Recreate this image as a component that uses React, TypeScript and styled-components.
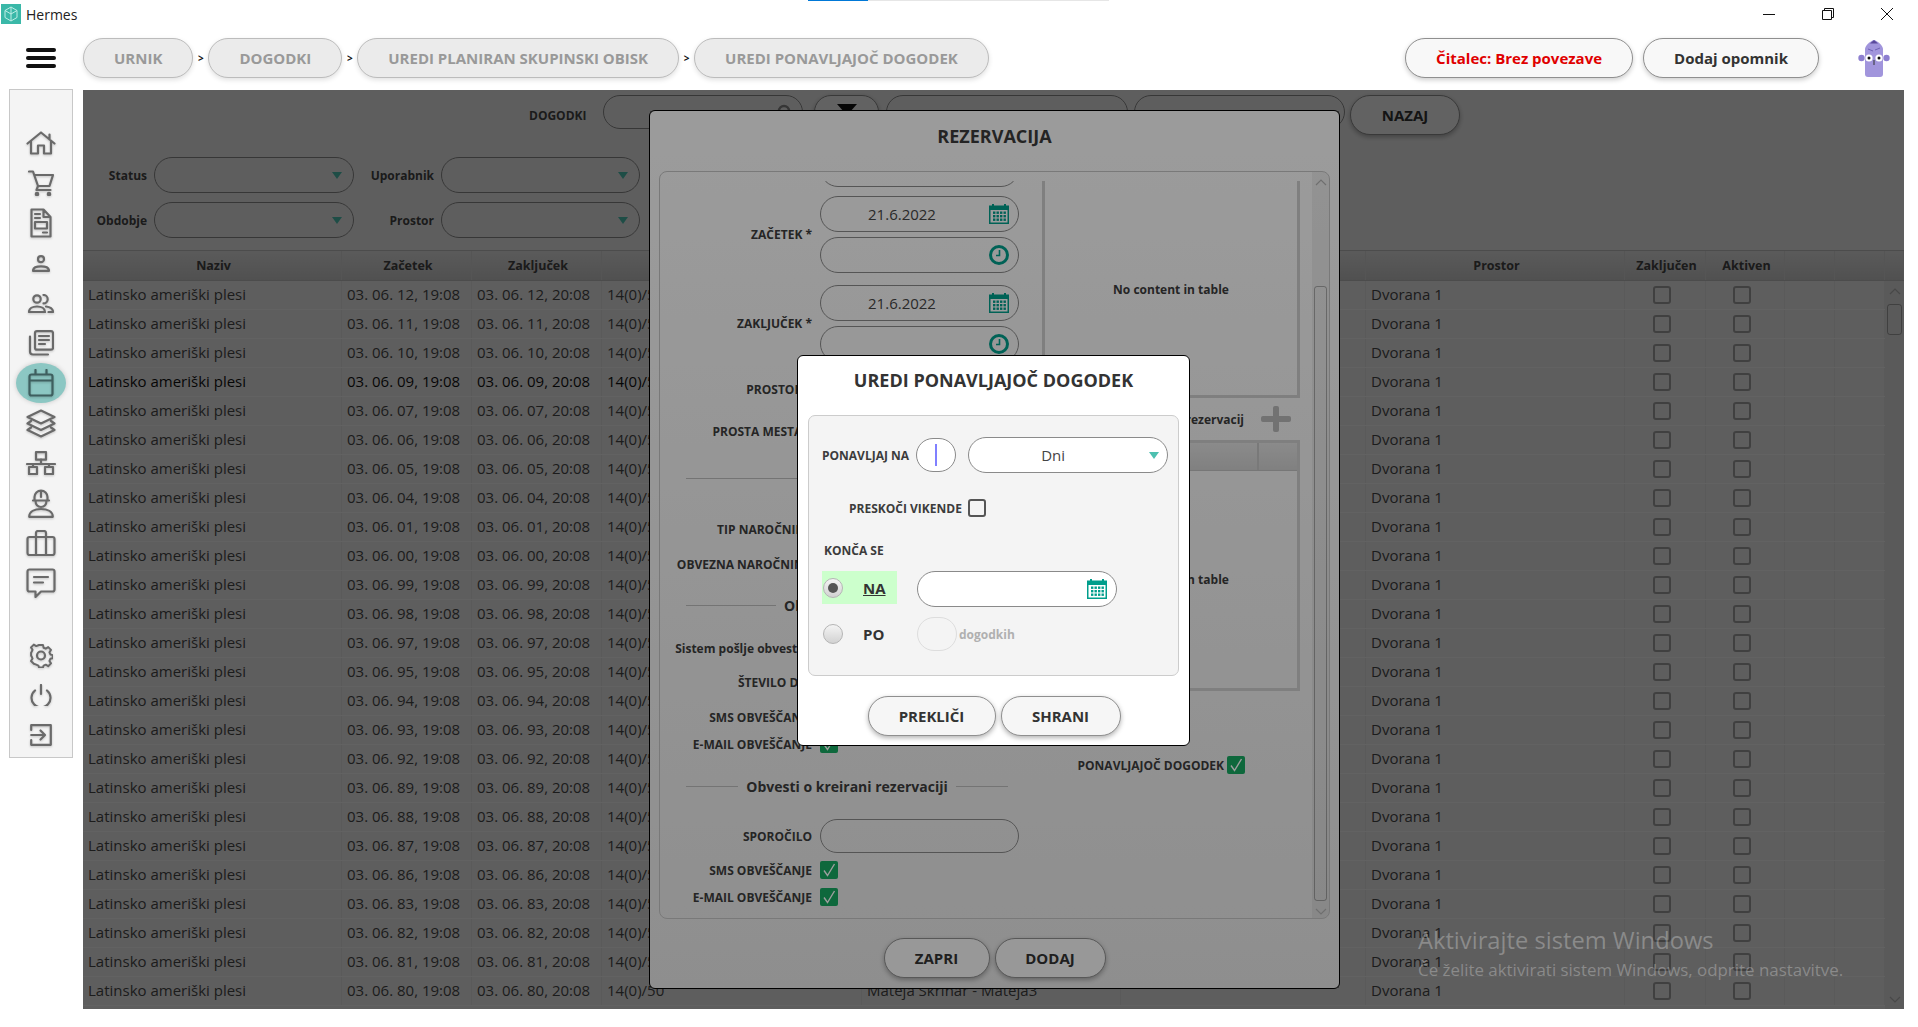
import React from 'react'
import styled, { createGlobalStyle } from 'styled-components'

const GlobalStyle = createGlobalStyle`
  html, body {
    margin: 0;
    padding: 0;
    background: #ffffff;
    overflow: hidden;
  }
  * {
    box-sizing: border-box;
  }
`

const AppWindow = styled.div`
  position: relative;
  width: 1918px;
  height: 1027px;
  overflow: hidden;
  background: #ffffff;
  font-family: 'Open Sans', 'Noto Sans', sans-serif;
  color: #444;
`

const LoadBar = styled.div`
  position: absolute;
  left: 808px;
  top: 0;
  width: 301px;
  height: 1px;
  background: linear-gradient(90deg, #0078d7 0 60px, #e6e6e6 60px);
`

const TitleBar = styled.div`
  height: 28px;
  display: flex;
  align-items: center;
  padding: 0 25px 0 1px;
`

const AppName = styled.span`
  margin-left: 5px;
  font-size: 14px;
  color: #222;
`

const WinControls = styled.div`
  margin-left: auto;
  display: flex;
  align-items: center;
  gap: 47px;
`

const TopBar = styled.div`
  height: 61px;
  display: flex;
  align-items: center;
  padding: 0 28px 1px 26px;
`

const Burger = styled.div`
  width: 30px;
  display: flex;
  flex-direction: column;
  gap: 3.5px;
  margin-right: 27px;
  span {
    height: 4.5px;
    border-radius: 2px;
    background: #111;
  }
`

const Crumbs = styled.div`
  display: flex;
  align-items: center;
`

const Crumb = styled.div`
  height: 40px;
  padding: 0 30px;
  display: flex;
  align-items: center;
  border: 1px solid #bcbcbc;
  border-radius: 20px;
  background: #ebebeb;
  color: #999;
  font-size: 15px;
  font-weight: 700;
  white-space: nowrap;
  box-shadow: 0 2px 5px rgba(0, 0, 0, 0.12);
`

const CrumbSep = styled.span`
  width: 15px;
  text-align: center;
  font-size: 10px;
  font-weight: 700;
  color: #111;
`

const TopActions = styled.div`
  margin-left: auto;
  display: flex;
  align-items: center;
  gap: 10px;
`

const Pill = styled.div<{ $alert?: boolean }>`
  height: 40px;
  padding: 0 30px;
  display: flex;
  align-items: center;
  border: 1px solid #8f8f8f;
  border-radius: 20px;
  background: #f8f8f8;
  color: ${(p) => (p.$alert ? '#e00000' : '#333')};
  font-size: 15px;
  font-weight: 700;
  white-space: nowrap;
  box-shadow: 0 2px 5px rgba(0, 0, 0, 0.2);
`

const Mascot = styled.svg`
  margin-left: 29px;
`

const Body = styled.div`
  display: flex;
  align-items: flex-start;
  gap: 10px;
  padding-left: 9px;
`

const Sidebar = styled.nav`
  width: 64px;
  height: 669px;
  padding-top: 33px;
  display: flex;
  flex-direction: column;
  align-items: center;
  background: #f4f4f4;
  border: 1px solid #c8c8c8;
`

const NavSlot = styled.div<{ $active?: boolean }>`
  width: 50px;
  height: 40px;
  display: flex;
  align-items: center;
  justify-content: center;
  border-radius: 50%;
  color: ${(p) => (p.$active ? '#3e5f5f' : '#6a6a6a')};
  background: ${(p) => (p.$active ? '#8cc7c3' : 'transparent')};
  box-shadow: ${(p) => (p.$active ? '0 0 5px rgba(0,0,0,.18)' : 'none')};
  svg {
    fill: none;
    stroke: currentColor;
    stroke-width: 2.2;
    stroke-linejoin: round;
    stroke-linecap: round;
    filter: drop-shadow(0 1px 1px rgba(0, 0, 0, 0.2));
  }
`

const NavGap = styled.div`
  height: 32px;
`

const Main = styled.main`
  position: relative;
  width: 1821px;
  height: 919px;
  margin-top: 1px;
  padding-top: 5px;
  display: flex;
  flex-direction: column;
  background: #ececec;
`

const Toolbar = styled.div`
  height: 40px;
  padding-left: 446px;
  display: flex;
  align-items: flex-start;
`

const ToolLabel = styled.span`
  align-self: center;
  width: 74px;
  font-size: 12px;
  font-weight: 700;
  color: #444;
`

const Field = styled.div<{ $w?: number; $h?: number; $gap?: number }>`
  position: relative;
  flex: none;
  width: ${(p) => (p.$w ? `${p.$w}px` : '100%')};
  height: ${(p) => p.$h ?? 36}px;
  margin-left: ${(p) => p.$gap ?? 0}px;
  display: flex;
  align-items: center;
  justify-content: center;
  padding-right: 35px;
  border: 1px solid #8a8a8a;
  border-radius: 18px;
  font-size: 15px;
  font-weight: 400;
  color: #444;
  background: transparent;
`

const WhiteField = styled(Field)`
  background: #fff;
  border-color: #8a8a8a;
  padding-right: 0;
`

const SelectField = styled(WhiteField)`
  padding-right: 30px;
`

const GhostField = styled(Field)`
  border-color: #ddd;
  padding-right: 0;
`

const FieldIcon = styled.span`
  position: absolute;
  right: 9px;
  top: 50%;
  transform: translateY(-50%);
  display: flex;
`

const Arrow = styled.i<{ $right?: number }>`
  position: absolute;
  right: ${(p) => p.$right ?? 10}px;
  top: 50%;
  margin-top: -3px;
  border-left: 5.5px solid transparent;
  border-right: 5.5px solid transparent;
  border-top: 7px solid #4dc0b0;
`

const RoundButton = styled.div<{ $w: number; $gap?: number; $h?: number }>`
  flex: none;
  width: ${(p) => p.$w}px;
  height: ${(p) => p.$h ?? 40}px;
  margin-left: ${(p) => p.$gap ?? 0}px;
  display: flex;
  align-items: center;
  justify-content: center;
  border: 1px solid #8f8f8f;
  border-radius: 20px;
  background: #f6f6f6;
  color: #333;
  font-size: 15px;
  font-weight: 700;
  box-shadow: 0 2px 5px rgba(0, 0, 0, 0.3);
`

const Filters = styled.div`
  margin-top: 22px;
  display: grid;
  grid-template-columns: 71px 200px 87px 199px;
  grid-auto-rows: 36px;
  row-gap: 9px;
  align-items: center;
`

const FilterLabel = styled.label`
  padding-right: 7px;
  text-align: right;
  font-size: 12px;
  font-weight: 700;
  color: #444;
`

const Table = styled.div`
  margin-top: 12px;
  flex: 1;
  display: flex;
  flex-direction: column;
  min-height: 0;
`

const columns = '259px 130px 130px 260px 259px 245px 259px 81px 79px 50px 50px 19px'

const HeadRow = styled.div`
  flex: none;
  height: 31px;
  display: grid;
  grid-template-columns: ${columns};
  background: linear-gradient(#e2e2e2, #c9c9c9);
  border-top: 1px solid #bdbdbd;
  border-bottom: 1px solid #bdbdbd;
`

const HeadCell = styled.div`
  display: flex;
  align-items: center;
  justify-content: center;
  padding-left: 3px;
  border-right: 1px solid #d4d4d4;
  font-size: 12.5px;
  font-weight: 700;
  color: #444;
`

const TableBody = styled.div`
  flex: 1;
  display: flex;
  min-height: 0;
`

const Rows = styled.div`
  flex: 1;
  overflow: hidden;
`

const Row = styled.div<{ $selected?: boolean }>`
  height: 29px;
  display: grid;
  grid-template-columns: 259px 130px 130px 260px 259px 245px 259px 81px 79px 50px 50px;
  border-bottom: 1px solid #f6f6f6;
  font-size: 15px;
  color: ${(p) => (p.$selected ? '#111' : '#484848')};
`

const Cell = styled.div`
  display: flex;
  align-items: center;
  padding: 0 0 2px 5px;
  border-right: 1px solid #e2e2e2;
  white-space: nowrap;
  overflow: hidden;
`

const RoomCell = styled(Cell)`
  color: #484848;
`

const BoxCell = styled.div`
  display: flex;
  align-items: center;
  justify-content: center;
  padding-right: 7px;
  border-right: 1px solid #e2e2e2;
`

const Box = styled.span`
  width: 18px;
  height: 18px;
  border: 2px solid #a0a0a0;
  border-radius: 3px;
`

const SkipBox = styled(Box)`
  margin-left: 6px;
  border-color: #555;
`

const Scroll = styled.div<{ $w: number }>`
  flex: none;
  width: ${(p) => p.$w}px;
  display: flex;
  flex-direction: column;
  align-items: center;
  background: rgba(0, 0, 0, 0.05);
`

const ScrollEnd = styled.div`
  flex: none;
  height: 20px;
  display: flex;
  align-items: center;
  justify-content: center;
`

const ScrollTrack = styled.div`
  flex: 1;
  width: 100%;
  display: flex;
  flex-direction: column;
  align-items: center;
`

const Thumb = styled.div<{ $top: number; $h: number }>`
  width: calc(100% - 4px);
  height: ${(p) => p.$h}px;
  margin-top: ${(p) => p.$top}px;
  border: 1px solid rgba(0, 0, 0, 0.28);
  border-radius: 3px;
`

const Dim = styled.div<{ $a: number }>`
  position: absolute;
  inset: 0;
  background: rgba(0, 0, 0, ${(p) => p.$a});
`

const Modal = styled.section`
  position: absolute;
  left: 566px;
  top: 20px;
  width: 691px;
  height: 879px;
  display: flex;
  flex-direction: column;
  align-items: center;
  background: linear-gradient(#fbfbfb, #e6e6e6);
  border: 1px solid #000;
  border-radius: 6px;
`

const ModalTitle = styled.h2`
  margin: 0;
  height: 60px;
  flex: none;
  line-height: 50px;
  font-size: 18px;
  font-weight: 700;
  color: #3a3a3a;
`

const Panel = styled.div`
  flex: none;
  width: 671px;
  height: 748px;
  display: flex;
  border: 1px solid #c4c4c4;
  border-radius: 8px;
  overflow: hidden;
`

const PanelMain = styled.div`
  flex: 1;
  display: flex;
  margin-top: 9px;
  overflow: hidden;
  height: 738px;
`

const LeftCol = styled.div`
  width: 382px;
  flex: none;
`

const FormRow = styled.div<{ $h: number; $top?: number }>`
  height: ${(p) => p.$h}px;
  margin-top: ${(p) => p.$top ?? 0}px;
  display: grid;
  grid-template-columns: 152px 199px;
  column-gap: 8px;
  align-items: center;
`

const FormLabel = styled.div`
  text-align: right;
  font-size: 12px;
  font-weight: 700;
  color: #3c3c3c;
  white-space: nowrap;
`

const FieldStack = styled.div`
  display: flex;
  flex-direction: column;
  gap: 5px;
`

const Check = styled.span`
  width: 18px;
  height: 18px;
  border-radius: 2px;
  display: flex;
  align-items: center;
  justify-content: center;
  background: #18a862;
`

const Rule = styled.div<{ $top?: number; $lead?: number }>`
  margin: ${(p) => p.$top ?? 0}px 34px 0 26px;
  height: 20px;
  display: flex;
  align-items: center;
  gap: 8px;
  font-size: 14px;
  font-weight: 700;
  color: #3c3c3c;
  white-space: nowrap;
  &::before {
    content: '';
    flex: ${(p) => (p.$lead ? `0 0 ${p.$lead}px` : 1)};
    height: 1px;
    background: #bbb;
  }
  &::after {
    content: '';
    flex: 1;
    height: 1px;
    background: #bbb;
  }
`

const PlainRule = styled.div<{ $top: number }>`
  margin: ${(p) => p.$top}px 34px 0 26px;
  height: 1px;
  background: #bbb;
`

const RightCol = styled.div`
  width: 258px;
  flex: none;
  display: flex;
  flex-direction: column;
`

const InnerTable = styled.div<{ $h: number; $pad?: number }>`
  height: ${(p) => p.$h}px;
  display: flex;
  flex-direction: column;
  border: 3px solid #cdcdcd;
  border-top-width: ${(p) => p.$pad ?? 0}px;
  font-size: 12px;
  font-weight: 700;
  color: #3c3c3c;
`

const InnerHead = styled.div`
  height: 28px;
  display: grid;
  grid-template-columns: 1fr 40px;
  background: linear-gradient(#e0e0e0, #cfcfcf);
  border-bottom: 1px solid #c0c0c0;
  div + div {
    border-left: 2px solid #c4c4c4;
  }
`

const Empty = styled.div<{ $top?: number }>`
  flex: 1;
  display: flex;
  align-items: center;
  justify-content: center;
  padding-top: ${(p) => p.$top ?? 0}px;
`

const AddRow = styled.div`
  height: 42px;
  display: flex;
  align-items: center;
  justify-content: flex-end;
  gap: 17px;
  padding-right: 9px;
  font-size: 12px;
  font-weight: 700;
  color: #3c3c3c;
`

const Plus = styled.span`
  position: relative;
  width: 30px;
  height: 26px;
  &::before,
  &::after {
    content: '';
    position: absolute;
    background: #b8b8b8;
    border-radius: 2px;
  }
  &::before {
    left: 0;
    right: 0;
    top: 10px;
    height: 6px;
  }
  &::after {
    left: 12px;
    top: 0;
    bottom: 0;
    width: 6px;
  }
`

const RepeatRow = styled.div`
  margin-top: 65px;
  padding-right: 55px;
  display: flex;
  align-items: center;
  justify-content: flex-end;
  gap: 3px;
  font-size: 12px;
  font-weight: 700;
  color: #3c3c3c;
`

const ModalButtons = styled.div<{ $top: number; $gap: number; $shift?: number }>`
  margin-top: ${(p) => p.$top}px;
  margin-left: ${(p) => p.$shift ?? 0}px;
  display: flex;
  justify-content: center;
  gap: ${(p) => p.$gap}px;
`

const SubModal = styled.section`
  position: absolute;
  left: 147px;
  top: 244px;
  width: 393px;
  height: 391px;
  padding: 0 10px;
  background: #fff;
  border: 1px solid #000;
  border-radius: 6px;
`

const SubTitle = styled.h3`
  margin: 0;
  height: 59px;
  line-height: 48px;
  text-align: center;
  font-size: 18px;
  font-weight: 700;
  color: #333;
`

const SubPanel = styled.div`
  height: 261px;
  padding: 21px 10px 0 13px;
  background: #f4f4f4;
  border: 1px solid #ccc;
  border-radius: 7px;
`

const SubRow = styled.div<{ $top?: number; $left?: number; $start?: boolean }>`
  display: flex;
  align-items: ${(p) => (p.$start ? 'flex-start' : 'center')};
  margin-top: ${(p) => p.$top ?? 0}px;
  margin-left: ${(p) => p.$left ?? 0}px;
  font-size: 12px;
  font-weight: 700;
  color: #3c3c3c;
  white-space: nowrap;
`

const Caret = styled.i`
  width: 2px;
  height: 22px;
  background: #8080ff;
`

const RadioCell = styled.div<{ $on?: boolean }>`
  width: 75px;
  height: 33px;
  display: flex;
  align-items: center;
  gap: 20px;
  padding-left: 1px;
  margin-right: 20px;
  background: ${(p) => (p.$on ? '#ccffcc' : 'transparent')};
  font-size: 15px;
  font-weight: 700;
  color: #333;
  text-decoration: ${(p) => (p.$on ? 'underline' : 'none')};
`

const Radio = styled.span<{ $on?: boolean }>`
  flex: none;
  width: 20px;
  height: 20px;
  display: flex;
  align-items: center;
  justify-content: center;
  border: 1px solid #b5b5b5;
  border-radius: 50%;
  background: linear-gradient(#f4f4f4, #d2d2d2);
  &::after {
    content: '';
    width: 10px;
    height: 10px;
    border-radius: 50%;
    background: ${(p) => (p.$on ? '#555' : 'transparent')};
  }
`

const Disabled = styled.span`
  margin-left: 2px;
  font-size: 12px;
  color: #b0b0b0;
`

const Watermark = styled.div`
  position: absolute;
  left: 1418px;
  top: 923px;
  color: rgba(255, 255, 255, 0.28);
  pointer-events: none;
  white-space: nowrap;
`

const WatermarkHead = styled.div`
  font-size: 23.7px;
  line-height: 34px;
`

const WatermarkSub = styled.div`
  font-size: 16.9px;
  line-height: 25px;
`

function CalendarIcon() {
  return (
    <svg width="20" height="20" viewBox="0 0 20 20">
      <path d="M0 1.5h3V0h2v1.5h10V0h2v1.5h3V20H0z" fill="#009e8c" />
      <rect x="1.5" y="6" width="17" height="12.5" fill="#fff" />
      {[7.5, 11, 14.5].map((y) =>
        [4, 7.5, 11, 14.5].map((x) => <rect key={`${x}-${y}`} x={x} y={y} width="2.4" height="2.4" fill="#009e8c" />),
      )}
    </svg>
  )
}

function ClockIcon() {
  return (
    <svg width="20" height="20" viewBox="0 0 20 20" fill="none" stroke="#009e8c">
      <circle cx="10" cy="10" r="8.5" strokeWidth="3" />
      <path d="M10.5 5v5.5H7" strokeWidth="1.6" />
    </svg>
  )
}

function CheckMark() {
  return (
    <svg width="14" height="14" viewBox="0 0 14 14" fill="none" stroke="#ffffff" strokeWidth="1.4">
      <path d="M2 7.5l3.5 5L12.5 1" />
    </svg>
  )
}

function Chevron({ down }: { down?: boolean }) {
  return (
    <svg width="12" height="7" viewBox="0 0 12 7" fill="none" stroke="#b4b4b4" strokeWidth="1.2">
      <path d={down ? 'M1 1l5 5 5-5' : 'M1 6l5-5 5 5'} />
    </svg>
  )
}

const navIcons: { w: number; h: number; body: React.ReactNode; active?: boolean }[] = [
  {
    w: 30,
    h: 24,
    body: <path d="M1.5 12.5L15 1.5l13.5 11M23.5 3.5v5M5 10v12.5h7v-8h6v8h7V10" />,
  },
  {
    w: 26,
    h: 26,
    body: (
      <>
        <path d="M1 1.5h4L10 16h11.5L25 5H6.5M10 16l-1.5 4h14" />
        <circle cx="9" cy="24" r="1.2" />
        <circle cx="21" cy="24" r="1.2" />
      </>
    ),
  },
  {
    w: 22,
    h: 30,
    body: (
      <>
        <path d="M1.5 1.5h12l7 7.5v19.5h-19zM13.5 1.5V9h7M5 6h5M5 10h5M13 24.5h4" />
        <rect x="5" y="14" width="12" height="6.5" />
      </>
    ),
  },
  {
    w: 18,
    h: 17,
    body: (
      <>
        <circle cx="9" cy="4.2" r="3" />
        <path d="M1 15.8c0-3 3.5-4.5 8-4.5s8 1.5 8 4.5z" />
      </>
    ),
  },
  {
    w: 26,
    h: 19,
    body: (
      <>
        <circle cx="9" cy="5" r="3.7" />
        <path d="M15.5 1a4.2 4.2 0 0 1 0 8.4M1 18c0-3.5 3.5-5.5 8-5.5s8 2 8 5.5zM18 12.5c3.5.5 7 2 7 5.5h-4.5" />
      </>
    ),
  },
  {
    w: 26,
    h: 26,
    body: (
      <>
        <rect x="7" y="1.2" width="18" height="18.5" rx="2" />
        <path d="M11 6h10M11 10h10M11 14h6M2 6.5v15a3 3 0 0 0 3 3h15" />
      </>
    ),
  },
  {
    w: 26,
    h: 28,
    active: true,
    body: <path d="M3.5 5.5h19a2 2 0 0 1 2 2v17a2 2 0 0 1-2 2h-19a2 2 0 0 1-2-2v-17a2 2 0 0 1 2-2zM1.5 11.5h23M7.5 1v4.5M18.5 1v4.5" />,
  },
  {
    w: 30,
    h: 29,
    body: <path d="M15 1.5L28.5 8 15 14.5 1.5 8zM5 12l-3.5 2.5L15 21l13.5-6.5L25 12M5 18.5L1.5 21 15 27.5 28.5 21 25 18.5" />,
  },
  {
    w: 30,
    h: 24,
    body: (
      <>
        <rect x="10" y="1.2" width="10" height="7.5" />
        <rect x="3" y="16" width="8" height="7" />
        <rect x="19" y="16" width="8" height="7" />
        <path d="M15 8.7v4.3M1 13h28M7 13v3M23 13v3" />
      </>
    ),
  },
  {
    w: 26,
    h: 29,
    body: (
      <path d="M6.5 11.5V8a6.5 6.5 0 0 1 13 0v3.5M5 11.5h16M13 1.5V8M7.5 11.5c0 4 2.2 6.5 5.5 6.5s5.5-2.5 5.5-6.5M1.2 27.8c0-5.5 5.5-7.8 11.8-7.8s11.8 2.3 11.8 7.8z" />
    ),
  },
  {
    w: 30,
    h: 26,
    body: (
      <>
        <rect x="1.5" y="7" width="27" height="18" rx="2" />
        <path d="M10 7V3a2 2 0 0 1 2-2h6a2 2 0 0 1 2 2v4M10 7v18M20 7v18" />
      </>
    ),
  },
  {
    w: 30,
    h: 30,
    body: <path d="M3.5 1.5h23a2 2 0 0 1 2 2v18a2 2 0 0 1-2 2H15l-5.5 5.5v-5.5h-6a2 2 0 0 1-2-2v-18a2 2 0 0 1 2-2zM8 9h14M8 14.5h9" />,
  },
]

const footIcons: { w: number; h: number; body: React.ReactNode }[] = [
  {
    w: 24,
    h: 25,
    body: (
      <>
        <path d="M9.8 1.5h4.4l.7 3.1 2.4 1 2.7-1.7 3.1 3.1-1.7 2.7 1 2.4 2.6.7v3.4l-2.6.7-1 2.4 1.7 2.7-3.1 3.1-2.7-1.7-2.4 1-.7 2.1H9.8l-.7-2.1-2.4-1L4 22.4.9 19.3l1.7-2.7-1-2.4-.6-.7V10l.6-.7 1-2.4L.9 4.2 4 1.1l2.7 1.7 2.4-1z" transform="translate(1.2 .6) scale(.9)" />
        <circle cx="12" cy="12.5" r="4" />
      </>
    ),
  },
  { w: 22, h: 22, body: <path d="M5 6.5a9.5 9.5 0 1 0 12 0M11 1v9" /> },
  { w: 22, h: 22, body: <path d="M1.2 6V1.2h19.6v19.6H1.2V16M1.2 11h13.5M10.5 6.5l4.5 4.5-4.5 4.5" /> },
]

const days = ['12', '11', '10', '09', '07', '06', '05', '04', '01', '00', '99', '98', '97', '95', '94', '93', '92', '89', '88', '87', '86', '83', '82', '81', '80']

function Nav({ w, h, body, active }: { w: number; h: number; body: React.ReactNode; active?: boolean }) {
  return (
    <NavSlot $active={active}>
      <svg width={w} height={h} viewBox={`0 0 ${w} ${h}`}>
        {body}
      </svg>
    </NavSlot>
  )
}

function App() {
  return (
    <AppWindow>
      <GlobalStyle />
      <LoadBar />
      <TitleBar>
        <svg width="20" height="20" viewBox="0 0 20 20">
          <rect width="20" height="20" fill="#3ab8a8" />
          <path d="M10 3l6 3.5v7L10 17l-6-3.5v-7zM10 3v14M4 6.5L10 10l6-3.5" fill="none" stroke="#bfeee6" strokeWidth="1" />
        </svg>
        <AppName>Hermes</AppName>
        <WinControls>
          <svg width="12" height="12" viewBox="0 0 12 12" stroke="#111" fill="none" strokeWidth="1">
            <path d="M0 6.5h12" />
          </svg>
          <svg width="12" height="12" viewBox="0 0 12 12" stroke="#111" fill="none" strokeWidth="1">
            <path d="M.5 2.5h9v9h-9zM2.5 2.5v-2h9v9h-2" />
          </svg>
          <svg width="12" height="12" viewBox="0 0 12 12" stroke="#111" fill="none" strokeWidth="1">
            <path d="M0 0l12 12M12 0L0 12" />
          </svg>
        </WinControls>
      </TitleBar>

      <TopBar>
        <Burger>
          <span />
          <span />
          <span />
        </Burger>
        <Crumbs>
          <Crumb>URNIK</Crumb>
          <CrumbSep>&gt;</CrumbSep>
          <Crumb>DOGODKI</Crumb>
          <CrumbSep>&gt;</CrumbSep>
          <Crumb>UREDI PLANIRAN SKUPINSKI OBISK</Crumb>
          <CrumbSep>&gt;</CrumbSep>
          <Crumb>UREDI PONAVLJAJOČ DOGODEK</Crumb>
        </Crumbs>
        <TopActions>
          <Pill $alert>Čitalec: Brez povezave</Pill>
          <Pill>Dodaj opomnik</Pill>
          <Mascot width="32" height="38" viewBox="0 0 32 38">
            <circle cx="3.5" cy="19" r="3.2" fill="#8d7fd0" />
            <circle cx="28.5" cy="19" r="3.2" fill="#8d7fd0" />
            <path d="M7 10c0-3 5-8 9-9 4 1 9 6 9 9v25a3 3 0 0 1-3 3H10a3 3 0 0 1-3-3z" fill="#a195dc" />
            <path d="M12 4.5L16 1l4 3.5z" fill="#5a4a9c" />
            <path d="M10 10l5 2M17 11l5-2" stroke="#6f61b5" strokeWidth="1" fill="none" />
            <circle cx="11" cy="19" r="3.6" fill="#fff" />
            <circle cx="21" cy="19" r="3.6" fill="#fff" />
            <circle cx="11" cy="19" r="1.5" fill="#111" />
            <circle cx="21" cy="19" r="1.5" fill="#111" />
            <path d="M16 21v5" stroke="#333" strokeWidth="1" />
          </Mascot>
        </TopActions>
      </TopBar>

      <Body>
        <Sidebar>
          {navIcons.map((icon, i) => (
            <Nav key={i} {...icon} />
          ))}
          <NavGap />
          {footIcons.map((icon, i) => (
            <Nav key={i} {...icon} />
          ))}
        </Sidebar>

        <Main>
          <Toolbar>
            <ToolLabel>DOGODKI</ToolLabel>
            <Field $w={200} $h={34}>
              <FieldIcon>
                <svg width="16" height="16" viewBox="0 0 16 16" fill="none" stroke="#888" strokeWidth="2.4">
                  <circle cx="7" cy="7" r="5" />
                  <path d="M11 11l4 4" />
                </svg>
              </FieldIcon>
            </Field>
            <RoundButton $w={65} $gap={11} $h={34}>
              <svg width="20" height="16" viewBox="0 0 20 16">
                <path d="M0 0h20l-7 8v8H7V8z" fill="#111" />
              </svg>
            </RoundButton>
            <Field $w={242} $h={34} $gap={7} />
            <Field $w={211} $h={34} $gap={6} />
            <RoundButton $w={110} $gap={5}>
              NAZAJ
            </RoundButton>
          </Toolbar>

          <Filters>
            <FilterLabel>Status</FilterLabel>
            <Field>
              <Arrow $right={11} />
            </Field>
            <FilterLabel>Uporabnik</FilterLabel>
            <Field>
              <Arrow $right={11} />
            </Field>
            <FilterLabel>Obdobje</FilterLabel>
            <Field>
              <Arrow $right={11} />
            </Field>
            <FilterLabel>Prostor</FilterLabel>
            <Field>
              <Arrow $right={11} />
            </Field>
          </Filters>

          <Table>
            <HeadRow>
              <HeadCell>Naziv</HeadCell>
              <HeadCell>Začetek</HeadCell>
              <HeadCell>Zaključek</HeadCell>
              <HeadCell />
              <HeadCell />
              <HeadCell />
              <HeadCell>Prostor</HeadCell>
              <HeadCell>Zaključen</HeadCell>
              <HeadCell>Aktiven</HeadCell>
              <HeadCell />
              <HeadCell />
              <HeadCell />
            </HeadRow>
            <TableBody>
              <Rows>
                {days.map((d) => (
                  <Row key={d} $selected={d === '09'}>
                    <Cell>Latinsko ameriški plesi</Cell>
                    <Cell>03. 06. {d}, 19:08</Cell>
                    <Cell>03. 06. {d}, 20:08</Cell>
                    <Cell>14(0)/50</Cell>
                    <Cell>Mateja Skrinar - Mateja3</Cell>
                    <Cell />
                    <RoomCell>Dvorana 1</RoomCell>
                    <BoxCell>
                      <Box />
                    </BoxCell>
                    <BoxCell>
                      <Box />
                    </BoxCell>
                    <Cell />
                    <Cell />
                  </Row>
                ))}
              </Rows>
              <Scroll $w={19}>
                <ScrollEnd>
                  <Chevron />
                </ScrollEnd>
                <ScrollTrack>
                  <Thumb $top={3} $h={31} />
                </ScrollTrack>
                <ScrollEnd>
                  <Chevron down />
                </ScrollEnd>
              </Scroll>
            </TableBody>
          </Table>

          <Dim $a={0.6} />

          <Modal>
            <ModalTitle>REZERVACIJA</ModalTitle>
            <Panel>
              <PanelMain>
                <LeftCol>
                  <FormRow $h={36} $top={-30}>
                    <span />
                    <Field />
                  </FormRow>
                  <FormRow $h={77} $top={9}>
                    <FormLabel>ZAČETEK *</FormLabel>
                    <FieldStack>
                      <Field>
                        21.6.2022
                        <FieldIcon>
                          <CalendarIcon />
                        </FieldIcon>
                      </Field>
                      <Field>
                        <FieldIcon>
                          <ClockIcon />
                        </FieldIcon>
                      </Field>
                    </FieldStack>
                  </FormRow>
                  <FormRow $h={77} $top={12}>
                    <FormLabel>ZAKLJUČEK *</FormLabel>
                    <FieldStack>
                      <Field>
                        21.6.2022
                        <FieldIcon>
                          <CalendarIcon />
                        </FieldIcon>
                      </Field>
                      <Field>
                        <FieldIcon>
                          <ClockIcon />
                        </FieldIcon>
                      </Field>
                    </FieldStack>
                  </FormRow>
                  <FormRow $h={34} $top={10}>
                    <FormLabel>PROSTOR *</FormLabel>
                    <Field $h={34} />
                  </FormRow>
                  <FormRow $h={34} $top={8}>
                    <FormLabel>PROSTA MESTA *</FormLabel>
                    <Field $h={34} />
                  </FormRow>
                  <PlainRule $top={30} />
                  <FormRow $h={34} $top={33}>
                    <FormLabel>TIP NAROČNINE</FormLabel>
                    <Field $h={34} />
                  </FormRow>
                  <FormRow $h={34} $top={1}>
                    <FormLabel>OBVEZNA NAROČNINA</FormLabel>
                    <Field $h={34} />
                  </FormRow>
                  <Rule $top={14} $lead={90}>
                    Obvesti
                  </Rule>
                  <FormRow $h={34} $top={16}>
                    <FormLabel>Sistem pošlje obvestilo</FormLabel>
                    <Field $h={34} />
                  </FormRow>
                  <FormRow $h={34}>
                    <FormLabel>ŠTEVILO DNI</FormLabel>
                    <Field $h={34} />
                  </FormRow>
                  <FormRow $h={18} $top={9}>
                    <FormLabel>SMS OBVEŠČANJE</FormLabel>
                    <Check>
                      <CheckMark />
                    </Check>
                  </FormRow>
                  <FormRow $h={18} $top={9}>
                    <FormLabel>E-MAIL OBVEŠČANJE</FormLabel>
                    <Check>
                      <CheckMark />
                    </Check>
                  </FormRow>
                  <Rule $top={23}>Obvesti o kreirani rezervaciji</Rule>
                  <FormRow $h={34} $top={23}>
                    <FormLabel>SPOROČILO</FormLabel>
                    <Field $h={34} />
                  </FormRow>
                  <FormRow $h={18} $top={8}>
                    <FormLabel>SMS OBVEŠČANJE</FormLabel>
                    <Check>
                      <CheckMark />
                    </Check>
                  </FormRow>
                  <FormRow $h={18} $top={9}>
                    <FormLabel>E-MAIL OBVEŠČANJE</FormLabel>
                    <Check>
                      <CheckMark />
                    </Check>
                  </FormRow>
                </LeftCol>
                <RightCol>
                  <InnerTable $h={217}>
                    <Empty $top={2}>No content in table</Empty>
                  </InnerTable>
                  <AddRow>
                    Seznam rezervacij
                    <Plus />
                  </AddRow>
                  <InnerTable $h={251} $pad={3}>
                    <InnerHead>
                      <div />
                      <div />
                    </InnerHead>
                    <Empty>No content in table</Empty>
                  </InnerTable>
                  <RepeatRow>
                    PONAVLJAJOČ DOGODEK
                    <Check>
                      <CheckMark />
                    </Check>
                  </RepeatRow>
                </RightCol>
              </PanelMain>
              <Scroll $w={17}>
                <ScrollEnd>
                  <Chevron />
                </ScrollEnd>
                <ScrollTrack>
                  <Thumb $top={94} $h={615} />
                </ScrollTrack>
                <ScrollEnd>
                  <Chevron down />
                </ScrollEnd>
              </Scroll>
            </Panel>
            <ModalButtons $top={19} $gap={5}>
              <RoundButton $w={106}>ZAPRI</RoundButton>
              <RoundButton $w={111}>DODAJ</RoundButton>
            </ModalButtons>

            <Dim $a={0.38} />

            <SubModal>
              <SubTitle>UREDI PONAVLJAJOČ DOGODEK</SubTitle>
              <SubPanel>
                <SubRow>
                  <span>PONAVLJAJ NA</span>
                  <WhiteField $w={40} $h={34} $gap={7}>
                    <Caret />
                  </WhiteField>
                  <SelectField $w={200} $gap={12}>
                    Dni
                    <Arrow $right={8} />
                  </SelectField>
                </SubRow>
                <SubRow $top={26} $left={27}>
                  <span>PRESKOČI VIKENDE</span>
                  <SkipBox />
                </SubRow>
                <SubRow $top={25} $left={2}>
                  KONČA SE
                </SubRow>
                <SubRow $top={12} $start>
                  <RadioCell $on>
                    <Radio $on />
                    NA
                  </RadioCell>
                  <WhiteField $w={200}>
                    <FieldIcon>
                      <CalendarIcon />
                    </FieldIcon>
                  </WhiteField>
                </SubRow>
                <SubRow $top={10}>
                  <RadioCell>
                    <Radio />
                    PO
                  </RadioCell>
                  <GhostField $w={40} $h={34} />
                  <Disabled>dogodkih</Disabled>
                </SubRow>
              </SubPanel>
              <ModalButtons $top={20} $gap={5} $shift={1}>
                <RoundButton $w={128}>PREKLIČI</RoundButton>
                <RoundButton $w={120}>SHRANI</RoundButton>
              </ModalButtons>
            </SubModal>
          </Modal>
        </Main>
      </Body>

      <Watermark>
        <WatermarkHead>Aktivirajte sistem Windows</WatermarkHead>
        <WatermarkSub>Če želite aktivirati sistem Windows, odprite nastavitve.</WatermarkSub>
      </Watermark>
    </AppWindow>
  )
}

export default App
